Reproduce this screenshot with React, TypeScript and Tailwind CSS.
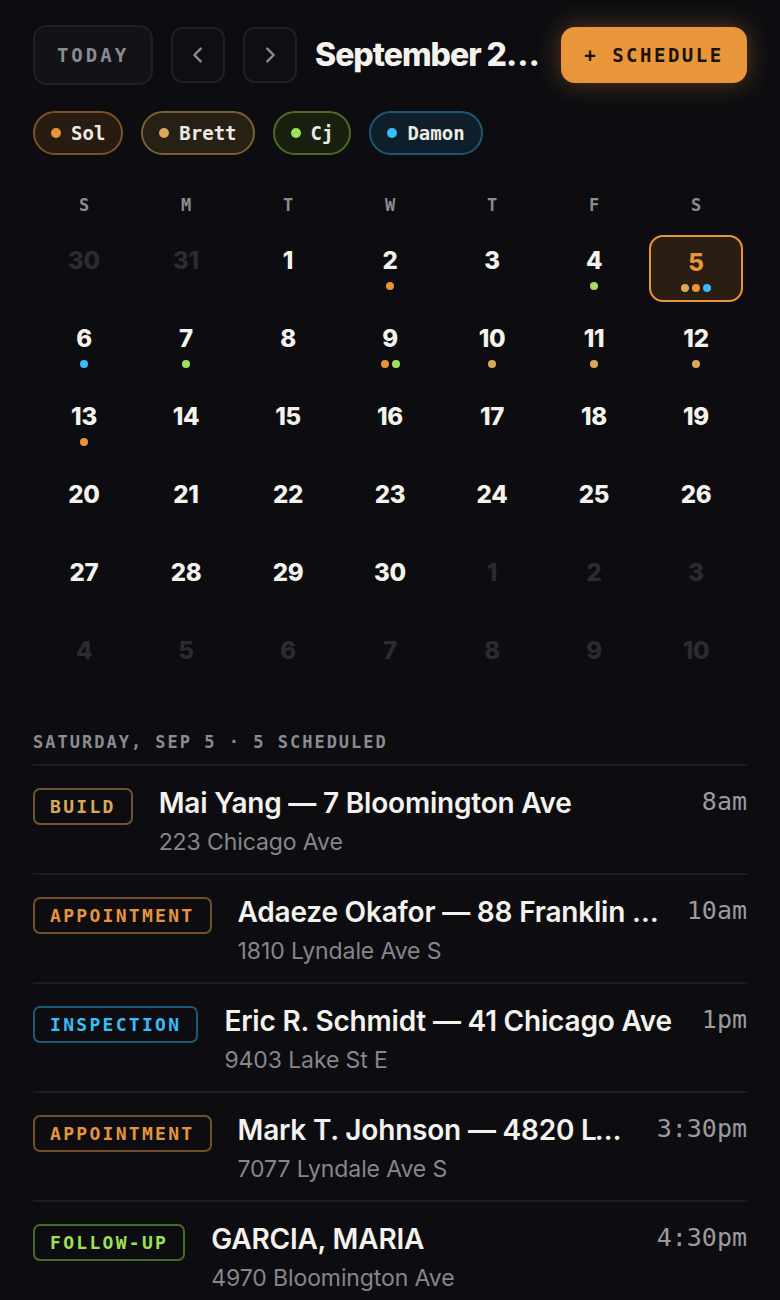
import React from "react";

const mono = "font-['DejaVu_Sans_Mono','Liberation_Mono',monospace]";
const sans = "font-['Inter','Lato','Noto_Sans',sans-serif]";

const crew = [
  { name: "Sol", dot: "bg-[#e8943a]", chip: "bg-[#281c12] border-[#7a5226]" },
  { name: "Brett", dot: "bg-[#d9a85a]", chip: "bg-[#262015] border-[#786034]" },
  { name: "Cj", dot: "bg-[#9fe05a]", chip: "bg-[#18210f] border-[#4d6b2a]" },
  { name: "Damon", dot: "bg-[#38bdf8]", chip: "bg-[#0e1f2b] border-[#1e5676]" },
];

const dotColor: Record<string, string> = {
  s: "bg-[#e8943a]",
  b: "bg-[#d9a85a]",
  c: "bg-[#9fe05a]",
  d: "bg-[#38bdf8]",
};

type Day = { n: number; out?: boolean; dots?: string[]; selected?: boolean };

const weeks: Day[][] = [
  [
    { n: 30, out: true },
    { n: 31, out: true },
    { n: 1 },
    { n: 2, dots: ["s"] },
    { n: 3 },
    { n: 4, dots: ["c"] },
    { n: 5, dots: ["b", "s", "d"], selected: true },
  ],
  [
    { n: 6, dots: ["d"] },
    { n: 7, dots: ["c"] },
    { n: 8 },
    { n: 9, dots: ["s", "c"] },
    { n: 10, dots: ["b"] },
    { n: 11, dots: ["b"] },
    { n: 12, dots: ["b"] },
  ],
  [
    { n: 13, dots: ["s"] },
    { n: 14 },
    { n: 15 },
    { n: 16 },
    { n: 17 },
    { n: 18 },
    { n: 19 },
  ],
  [{ n: 20 }, { n: 21 }, { n: 22 }, { n: 23 }, { n: 24 }, { n: 25 }, { n: 26 }],
  [
    { n: 27 },
    { n: 28 },
    { n: 29 },
    { n: 30 },
    { n: 1, out: true },
    { n: 2, out: true },
    { n: 3, out: true },
  ],
  [
    { n: 4, out: true },
    { n: 5, out: true },
    { n: 6, out: true },
    { n: 7, out: true },
    { n: 8, out: true },
    { n: 9, out: true },
    { n: 10, out: true },
  ],
];

const tagStyle: Record<string, string> = {
  BUILD: "text-[#d9a85a] border-[#6e5630]",
  APPOINTMENT: "text-[#e8943a] border-[#74502a]",
  INSPECTION: "text-[#38bdf8] border-[#1c5a78]",
  "FOLLOW-UP": "text-[#9fe05a] border-[#4a6a2a]",
};

const jobs = [
  { tag: "BUILD", title: "Mai Yang — 7 Bloomington Ave", addr: "223 Chicago Ave", time: "8am" },
  { tag: "APPOINTMENT", title: "Adaeze Okafor — 88 Franklin Ave E", addr: "1810 Lyndale Ave S", time: "10am" },
  { tag: "INSPECTION", title: "Eric R. Schmidt — 41 Chicago Ave", addr: "9403 Lake St E", time: "1pm" },
  { tag: "APPOINTMENT", title: "Mark T. Johnson — 4820 Lyndale Ave S", addr: "7077 Lyndale Ave S", time: "3:30pm" },
  { tag: "FOLLOW-UP", title: "GARCIA, MARIA", addr: "4970 Bloomington Ave", time: "4:30pm" },
];

function Chevron({ dir }: { dir: "left" | "right" }) {
  return (
    <svg width="22" height="22" viewBox="0 0 24 24" fill="none" stroke="#8a8a8f" strokeWidth="2.6" strokeLinecap="round" strokeLinejoin="round">
      {dir === "left" ? <path d="M15 5l-7 7 7 7" /> : <path d="M9 5l7 7-7 7" />}
    </svg>
  );
}

export default function App() {
  return (
    <div className={`min-h-[1300px] bg-[#0d0d11] px-[33px] pt-[25px] text-[#f4f2ec] ${sans}`}>
      {/* Toolbar */}
      <div className="flex items-center gap-[18px]">
        <button className={`h-[60px] w-[120px] shrink-0 rounded-[14px] border-2 border-[#1f2025] bg-[#131317] text-[19px] font-bold tracking-[3px] text-[#8b8b90] ${mono}`}>
          TODAY
        </button>
        <button className="flex h-[56px] w-[54px] shrink-0 items-center justify-center rounded-[12px] border-2 border-[#1f2025] bg-[#0f0f13]">
          <Chevron dir="left" />
        </button>
        <button className="flex h-[56px] w-[54px] shrink-0 items-center justify-center rounded-[12px] border-2 border-[#1f2025] bg-[#0f0f13]">
          <Chevron dir="right" />
        </button>
        <h1 className="min-w-0 flex-1 truncate text-[32px] font-extrabold tracking-[-1px] text-[#f4f2ec]">
          September 2026
        </h1>
        <button className={`h-[56px] w-[186px] shrink-0 rounded-[14px] bg-[#e9953a] text-[19px] font-bold tracking-[2.5px] text-[#1a1208] shadow-[0_0_26px_rgba(233,149,58,0.35)] ${mono}`}>
          + SCHEDULE
        </button>
      </div>

      {/* Crew filters */}
      <div className="mt-[26px] flex gap-[18px]">
        {crew.map((c) => (
          <div
            key={c.name}
            className={`flex h-[44px] items-center gap-[10px] rounded-full border-2 px-[16px] ${c.chip}`}
          >
            <span className={`h-[10px] w-[10px] rounded-full ${c.dot}`} />
            <span className={`text-[19px] font-bold text-[#ecebe6] ${mono}`}>{c.name}</span>
          </div>
        ))}
      </div>

      {/* Month grid */}
      <div className="mt-[38px] grid grid-cols-7">
        {["S", "M", "T", "W", "T", "F", "S"].map((d, i) => (
          <div key={i} className={`h-[24px] text-center text-[17px] font-bold leading-[24px] text-[#8b8b90] ${mono}`}>
            {d}
          </div>
        ))}
      </div>
      <div className="mt-[18px] grid grid-cols-7 gap-y-[11px]">
        {weeks.flat().map((d, i) => (
          <div
            key={i}
            className={`mx-[4px] flex h-[67px] flex-col items-center rounded-[14px] pt-[11px] ${
              d.selected ? "border-2 border-[#e9953a] bg-[#2a1e13] pt-[9px]" : ""
            }`}
          >
            <span
              className={`text-[24px] font-extrabold leading-[30px] tracking-[-0.3px] ${
                d.out ? "text-[#2b2b30]" : d.selected ? "text-[#e9953a]" : "text-[#f4f2ec]"
              }`}
            >
              {d.n}
            </span>
            {d.dots && (
              <div className="mt-[6px] flex gap-[3px]">
                {d.dots.map((k, j) => (
                  <span key={j} className={`h-[8px] w-[8px] rounded-full ${dotColor[k]}`} />
                ))}
              </div>
            )}
          </div>
        ))}
      </div>

      {/* Day agenda */}
      <div className={`mt-[40px] border-b-2 border-[#1c1d22] pb-[12px] text-[17px] font-bold leading-[20px] tracking-[2px] text-[#8b8b90] ${mono}`}>
        SATURDAY, SEP 5 · 5 SCHEDULED
      </div>
      <div>
        {jobs.map((j, i) => (
          <div key={i} className="flex items-start gap-[26px] border-b-2 border-[#1c1d22] pb-[16px] pt-[20px]">
            <span
              className={`mt-[2px] shrink-0 rounded-[7px] border-2 px-[15px] text-[18px] font-bold leading-[33px] tracking-[2.3px] ${mono} ${tagStyle[j.tag]}`}
            >
              {j.tag}
            </span>
            <div className="min-w-0 flex-1">
              <div className="truncate text-[28px] font-semibold leading-[34px] tracking-[-0.2px] text-[#f4f2ec]">
                {j.title}
              </div>
              <div className="mt-[7px] text-[23px] leading-[30px] tracking-[-0.1px] text-[#86868b]">{j.addr}</div>
            </div>
            <span className={`shrink-0 text-[25px] leading-[32px] text-[#9a9a9f] ${mono}`}>{j.time}</span>
          </div>
        ))}
      </div>
    </div>
  );
}
